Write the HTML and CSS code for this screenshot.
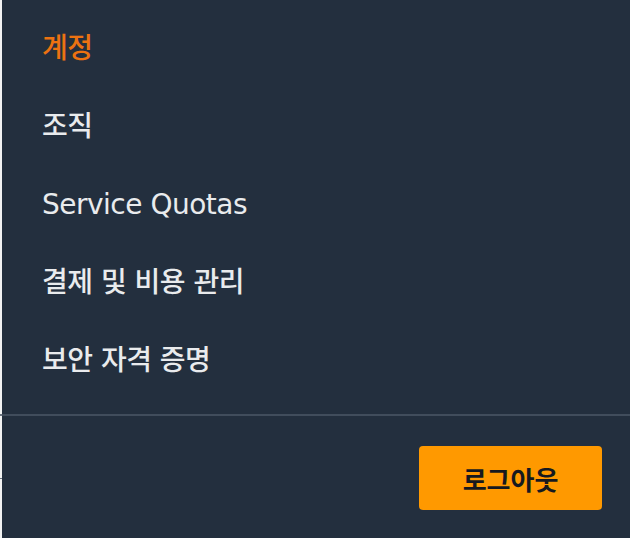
FILE: index.html
```html
<!DOCTYPE html>
<html lang="ko">
<head>
<meta charset="utf-8">
<title>계정 메뉴</title>
<link rel="stylesheet" href="styles.css">
</head>
<body>
<div class="page">
  <div class="edge"></div>
  <nav class="panel">
    <ul class="menu">
      <li class="item active">계정</li>
      <li class="item">조직</li>
      <li class="item">Service Quotas</li>
      <li class="item">결제 및 비용 관리</li>
      <li class="item">보안 자격 증명</li>
    </ul>
    <div class="divider"></div>
    <div class="footer">
      <button class="logout" type="button">로그아웃</button>
    </div>
  </nav>
</div>
</body>
</html>
```
FILE: styles.css
```css
html, body {
  margin: 0;
  padding: 0;
  height: 100%;
}
body {
  background: #232f3e;
  font-family: "DejaVu Sans", "Noto Sans CJK KR", sans-serif;
}
.page {
  display: flex;
  height: 538px;
  overflow: hidden;
}
.edge {
  width: 2px;
  flex: none;
  background:
    linear-gradient(#f2f3f3 0 414px, #6b7480 414px 416px, #f2f3f3 416px 478px, #6b7480 478px 479px, #f2f3f3 479px);
}
.panel {
  flex: 1;
  background: #232f3e;
  display: flex;
  flex-direction: column;
}
.menu {
  list-style: none;
  margin: 0;
  padding: 10px 0 0 40px;
}
.item {
  font-size: 28px;
  font-weight: 500;
  letter-spacing: -0.5px;
  line-height: 38px;
  padding: 20px 0;
  color: #e9ebed;
}
.item.active {
  color: #ec7211;
}
.divider {
  height: 2px;
  margin-top: 14px;
  background: #414d5c;
}
.footer {
  display: flex;
  justify-content: flex-end;
  padding: 30px 28px 0 0;
}
.logout {
  width: 183px;
  height: 64px;
  border: none;
  border-radius: 4px;
  background: #ff9900;
  color: #16191f;
  font-family: "Noto Sans CJK KR", sans-serif;
  font-size: 26px;
  font-weight: 700;
  padding: 0;
}
```
